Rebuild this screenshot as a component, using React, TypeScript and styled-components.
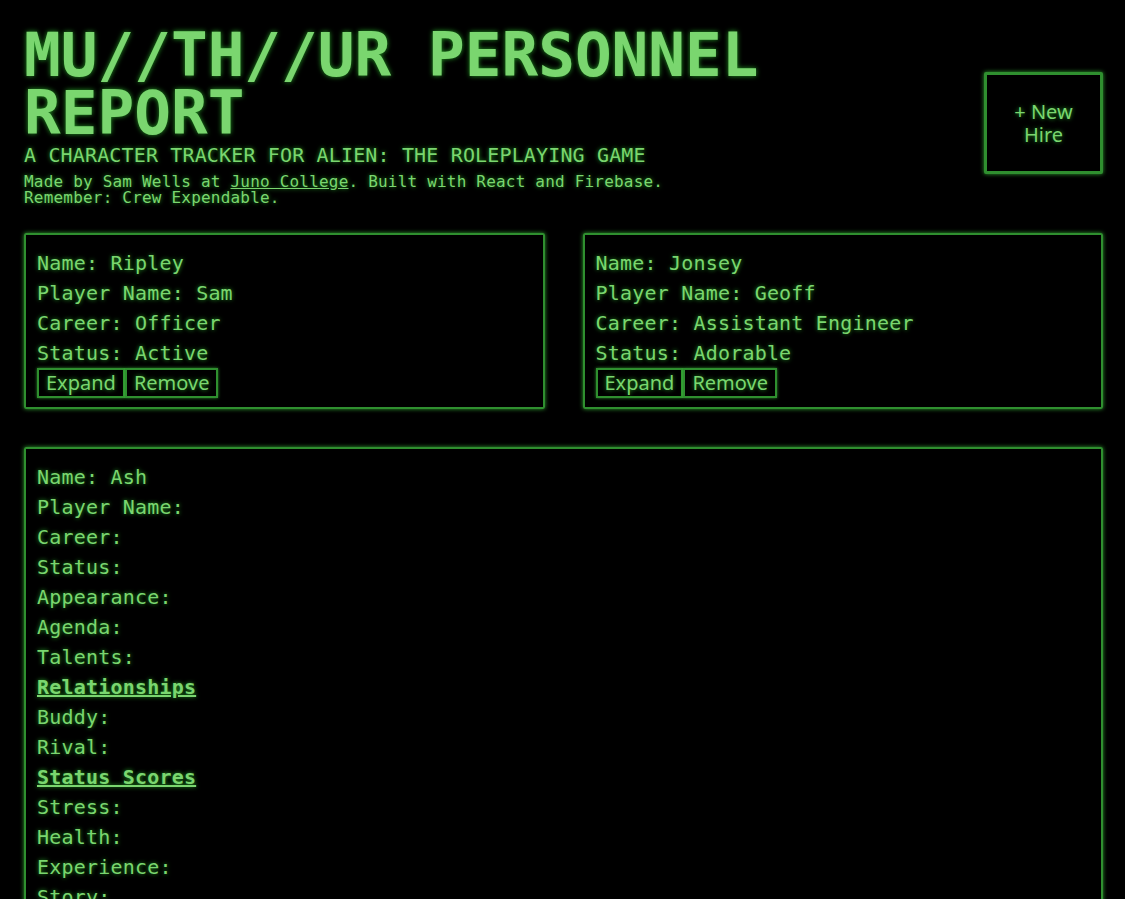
import React from "react";
import styled, { createGlobalStyle } from "styled-components";

const GREEN = "#7ad66f";
const BORDER = "#2f8f2f";
const MONO = `"DejaVu Sans Mono", "Liberation Mono", monospace`;
const SANS = `"Noto Sans", "Open Sans", sans-serif`;

const Global = createGlobalStyle`
  html, body { margin: 0; padding: 0; background: #000; }
  body {
    color: ${GREEN};
    font-family: ${MONO};
    text-shadow: 0 0 4px rgba(40, 170, 40, 0.9);
  }
`;

const Page = styled.main`
  padding: 26px 22px 40px 24px;
`;

const Header = styled.header`
  display: flex;
  justify-content: space-between;
  align-items: flex-start;
  margin-bottom: 27px;
`;

const TitleBlock = styled.div`
  display: flex;
  flex-direction: column;
`;

const Title = styled.h1`
  margin: 0;
  font-family: ${MONO};
  font-weight: 700;
  font-size: 61px;
  line-height: 58px;
  letter-spacing: 0;
  text-shadow: 0 0 5px rgba(40, 170, 40, 0.9);
`;

const Subtitle = styled.h2`
  margin: 0 0 6px 0;
  font-family: ${MONO};
  font-weight: 400;
  font-size: 20px;
  line-height: 26px;
  letter-spacing: 0.15px;
`;

const Credit = styled.p`
  margin: 0;
  font-size: 16px;
  line-height: 16px;
  letter-spacing: 0.2px;
  white-space: pre-line;

  a {
    color: ${GREEN};
    text-decoration: underline;
  }
`;

const NewHire = styled.button`
  margin-top: 46px;
  width: 119px;
  height: 102px;
  background: #000;
  color: ${GREEN};
  font-family: ${SANS};
  font-size: 20px;
  line-height: 23px;
  border: 3px solid ${BORDER};
  border-radius: 2px;
  box-shadow: 0 0 4px rgba(60, 200, 60, 0.8);
  text-shadow: 0 0 4px rgba(40, 170, 40, 0.9);
  padding: 0 18px;
  cursor: pointer;
`;

const Grid = styled.section`
  display: grid;
  grid-template-columns: 1fr 1fr;
  column-gap: 38px;
  row-gap: 38px;
`;

const Card = styled.article<{ $wide?: boolean }>`
  grid-column: ${(p) => (p.$wide ? "1 / span 2" : "auto")};
  border: 2px solid ${BORDER};
  border-radius: 2px;
  box-shadow: 0 0 4px rgba(60, 200, 60, 0.8);
  padding: 13px 11px 9px 11px;
  display: flex;
  flex-direction: column;
`;

const Line = styled.p<{ $heading?: boolean }>`
  margin: 0;
  font-size: 20px;
  line-height: 30px;
  letter-spacing: 0.2px;
  font-weight: ${(p) => (p.$heading ? 700 : 400)};
  text-decoration: ${(p) => (p.$heading ? "underline" : "none")};
`;

const Buttons = styled.div`
  display: flex;
`;

const Btn = styled.button`
  background: #000;
  color: ${GREEN};
  font-family: ${SANS};
  font-size: 20px;
  line-height: 26px;
  height: 30px;
  padding: 0 7px;
  border: 2px solid ${BORDER};
  box-shadow: 0 0 3px rgba(60, 200, 60, 0.7);
  text-shadow: 0 0 4px rgba(40, 170, 40, 0.9);
  cursor: pointer;
`;

type Crew = { name: string; player: string; career: string; status: string };

const crew: Crew[] = [
  { name: "Ripley", player: "Sam", career: "Officer", status: "Active" },
  { name: "Jonsey", player: "Geoff", career: "Assistant Engineer", status: "Adorable" },
];

const detail: { label: string; heading?: boolean }[] = [
  { label: "Name: Ash" },
  { label: "Player Name:" },
  { label: "Career:" },
  { label: "Status:" },
  { label: "Appearance:" },
  { label: "Agenda:" },
  { label: "Talents:" },
  { label: "Relationships", heading: true },
  { label: "Buddy:" },
  { label: "Rival:" },
  { label: "Status Scores", heading: true },
  { label: "Stress:" },
  { label: "Health:" },
  { label: "Experience:" },
  { label: "Story:" },
];

export default function App() {
  return (
    <>
      <Global />
      <Page>
        <Header>
          <TitleBlock>
            <Title>
              MU//TH//UR PERSONNEL
              <br />
              REPORT
            </Title>
            <Subtitle>A CHARACTER TRACKER FOR ALIEN: THE ROLEPLAYING GAME</Subtitle>
            <Credit>
              Made by Sam Wells at <a href="#">Juno College</a>. Built with React and Firebase.
              {"\n"}Remember: Crew Expendable.
            </Credit>
          </TitleBlock>
          <NewHire>+ New Hire</NewHire>
        </Header>
        <Grid>
          {crew.map((c) => (
            <Card key={c.name}>
              <Line>Name: {c.name}</Line>
              <Line>Player Name: {c.player}</Line>
              <Line>Career: {c.career}</Line>
              <Line>Status: {c.status}</Line>
              <Buttons>
                <Btn>Expand</Btn>
                <Btn>Remove</Btn>
              </Buttons>
            </Card>
          ))}
          <Card $wide>
            {detail.map((d) => (
              <Line key={d.label} $heading={d.heading}>
                {d.label}
              </Line>
            ))}
          </Card>
        </Grid>
      </Page>
    </>
  );
}
